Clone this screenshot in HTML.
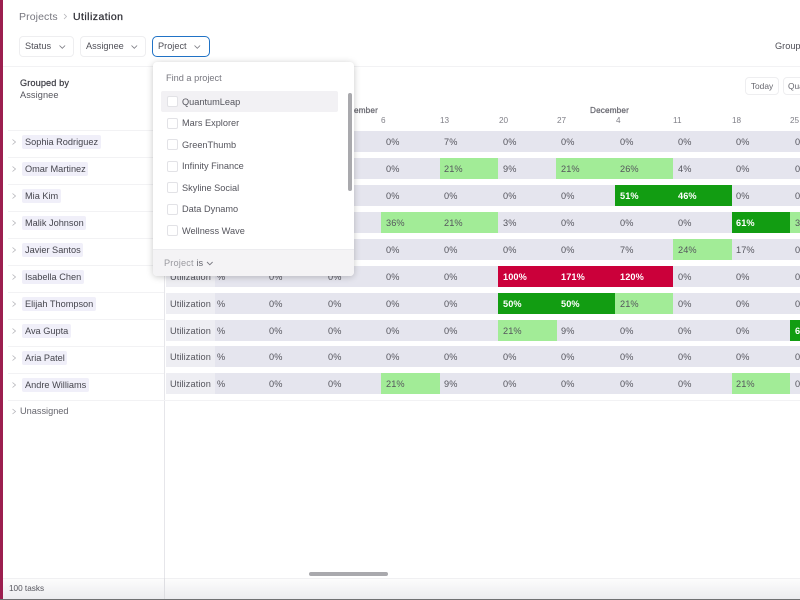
<!DOCTYPE html>
<html><head><meta charset="utf-8">
<style>
html,body{margin:0;padding:0;width:800px;height:600px;overflow:hidden;background:#fff}
body{font-family:"Liberation Sans",sans-serif;font-size:9.2px;color:#4f4f57}
#p{position:absolute;left:0;top:0;width:800px;height:600px;overflow:hidden;background:#fff;filter:blur(.3px)}
div,span{position:absolute;white-space:nowrap}
.bar{left:0;top:0;width:3px;height:600px;background:#9c1f4f}
.btn{top:36px;height:19px;border:1px solid #eeeeF0;border-radius:4px;line-height:19px;box-sizing:content-box}
.btn span{left:5px;top:0}
svg{position:absolute;overflow:visible}
.hl{left:3px;height:1px;background:#f2f2f4}
.n{left:22px;height:14px;line-height:14px;background:#f0eff9;border-radius:2px;padding:0 2.500px 0 3px;color:#45454d}
.row{left:166px;width:634px;height:21px;background:#e5e5ee}
.row .l{left:0;top:0;width:49px;height:21px;background:#eeeef3}
.row span{top:0;line-height:22px;color:#55555d;letter-spacing:.1px}
.row .u{left:4px}
.g,.G,.R{top:0;height:21px}
.g{background:#a2ec97}.G{background:#129d12}.R{background:#cb003a}
.w{color:#fff!important;font-weight:bold}
.d{color:#7f7f87;top:116px;font-size:8.2px;line-height:10px}
.m{color:#66666e;top:106px;font-size:8.2px;line-height:10px;-webkit-text-stroke:.25px #66666e;letter-spacing:.15px}
.pop{left:153px;top:62px;width:201px;height:214px;background:#fff;border-radius:4px;box-shadow:0 1px 7px rgba(0,0,0,.22);overflow:hidden}
.cb{left:14px;width:9px;height:9px;border:1px solid #e2e2e6;border-radius:2px;background:#fff}
.it{left:29px;line-height:12px;color:#55555d}
</style></head><body><div id="p">
<div class="bar"></div>

<div style="left:19px;top:10px;font-size:10.5px;line-height:14px;color:#77777f;letter-spacing:.1px">Projects</div>
<svg style="left:0;top:0" width="1" height="1"><path d="M64 14l2.500 2.500L64 19" fill="none" stroke="#b5b5ba" stroke-width=".8"/></svg>
<div style="left:73px;top:10px;font-size:10.5px;line-height:14px;color:#2f2f36;letter-spacing:.45px;-webkit-text-stroke:.25px #2f2f36">Utilization</div>

<div class="btn" style="left:19px;width:53px"><span>Status</span><svg style="left:0;top:0" width="1" height="1"><path d="M39.500 8.500l2.800 2.800 2.800-2.800" fill="none" stroke="#77777f" stroke-width=".8"/></svg></div>
<div class="btn" style="left:80px;width:64px"><span>Assignee</span><svg style="left:0;top:0" width="1" height="1"><path d="M50.500 8.500l2.800 2.800 2.800-2.800" fill="none" stroke="#77777f" stroke-width=".8"/></svg></div>
<div class="btn" style="left:152px;width:56px;border:1px solid #2173c6;border-radius:5px"><span>Project</span><svg style="left:0;top:0" width="1" height="1"><path d="M41.500 8.500l2.800 2.800 2.800-2.800" fill="none" stroke="#77777f" stroke-width=".8"/></svg></div>
<div style="left:775px;top:41px;line-height:11px;color:#4f4f57">Group</div>
<div class="hl" style="top:66px;width:797px"></div>

<div style="left:20px;top:78px;line-height:11px;color:#3c3c44;-webkit-text-stroke:.2px #3c3c44;letter-spacing:.1px">Grouped by</div>
<div style="left:20px;top:90px;line-height:11px;color:#55555d;letter-spacing:.1px">Assignee</div>

<div style="left:745px;top:77px;width:32px;height:16px;border:1px solid #eeeef0;border-radius:4px;line-height:16px;text-align:center;font-size:8.4px;color:#66666e">Today</div>
<div style="left:783px;top:77px;width:30px;height:16px;border:1px solid #eeeef0;border-radius:4px;line-height:16px;font-size:8.4px;color:#66666e;text-indent:4px">Quarter</div>

<div class="m" style="left:339px">November</div>
<div class="m" style="left:590px">December</div>
<div class="d" style="left:381px">6</div><div class="d" style="left:440px">13</div><div class="d" style="left:499px">20</div><div class="d" style="left:557px">27</div><div class="d" style="left:616px">4</div><div class="d" style="left:673px">11</div><div class="d" style="left:732px">18</div><div class="d" style="left:790px">25</div>

<div style="left:164px;top:67px;width:1px;height:533px;background:#e6e6ea"></div>

<div class="hl" style="top:130px;left:8px;width:156px"></div>
<div class="hl" style="top:157px;left:8px;width:156px"></div>
<div class="hl" style="top:184px;left:8px;width:156px"></div>
<div class="hl" style="top:211px;left:8px;width:156px"></div>
<div class="hl" style="top:238px;left:8px;width:156px"></div>
<div class="hl" style="top:265px;left:8px;width:156px"></div>
<div class="hl" style="top:292px;left:8px;width:156px"></div>
<div class="hl" style="top:319px;left:8px;width:156px"></div>
<div class="hl" style="top:346px;left:8px;width:156px"></div>
<div class="hl" style="top:373px;left:8px;width:156px"></div>
<div class="hl" style="top:400px;left:8px;width:792px"></div>

<svg style="left:0;top:0" width="1" height="1"><g fill="none" stroke="#b4b4ba" stroke-width=".8"><path d="M12.500 139.500l3 2.500-3 2.500"/><path d="M12.500 166.500l3 2.500-3 2.500"/><path d="M12.500 193.500l3 2.500-3 2.500"/><path d="M12.500 220.500l3 2.500-3 2.500"/><path d="M12.500 247.500l3 2.500-3 2.500"/><path d="M12.500 274.500l3 2.500-3 2.500"/><path d="M12.500 301.500l3 2.500-3 2.500"/><path d="M12.500 328.500l3 2.500-3 2.500"/><path d="M12.500 355.500l3 2.500-3 2.500"/><path d="M12.500 382.500l3 2.500-3 2.500"/><path d="M12.500 409l3 2.500-3 2.500"/></g></svg>

<div class="n" style="top:135px">Sophia Rodriguez</div>
<div class="n" style="top:162px">Omar Martinez</div>
<div class="n" style="top:189px">Mia Kim</div>
<div class="n" style="top:216px">Malik Johnson</div>
<div class="n" style="top:243px">Javier Santos</div>
<div class="n" style="top:270px">Isabella Chen</div>
<div class="n" style="top:297px">Elijah Thompson</div>
<div class="n" style="top:324px">Ava Gupta</div>
<div class="n" style="top:351px">Aria Patel</div>
<div class="n" style="top:378px">Andre Williams</div>
<div style="left:20px;top:406px;line-height:11px;color:#66666e">Unassigned</div>

<div class="row" style="top:131px"><span style="left:220px">0%</span><span style="left:278px">7%</span><span style="left:337px">0%</span><span style="left:395px">0%</span><span style="left:454px">0%</span><span style="left:512px">0%</span><span style="left:570px">0%</span><span style="left:629px">0%</span></div>

<div class="row" style="top:158px"><div class="g" style="left:274px;width:58px"></div><div class="g" style="left:390px;width:117px"></div><span style="left:220px">0%</span><span style="left:278px">21%</span><span style="left:337px">9%</span><span style="left:395px">21%</span><span style="left:454px">26%</span><span style="left:512px">4%</span><span style="left:570px">0%</span><span style="left:629px">0%</span></div>

<div class="row" style="top:185px"><div class="G" style="left:449px;width:117px"></div><span style="left:220px">0%</span><span style="left:278px">0%</span><span style="left:337px">0%</span><span style="left:395px">0%</span><span class="w" style="left:454px">51%</span><span class="w" style="left:512px">46%</span><span style="left:570px">0%</span><span style="left:629px">0%</span></div>

<div class="row" style="top:212px"><div class="g" style="left:215px;width:117px"></div><div class="G" style="left:566px;width:58px"></div><div class="g" style="left:624px;width:10px"></div><span style="left:220px">36%</span><span style="left:278px">21%</span><span style="left:337px">3%</span><span style="left:395px">0%</span><span style="left:454px">0%</span><span style="left:512px">0%</span><span class="w" style="left:570px">61%</span><span style="left:629px">3%</span></div>

<div class="row" style="top:239px"><div class="g" style="left:507px;width:59px"></div><span style="left:220px">0%</span><span style="left:278px">0%</span><span style="left:337px">0%</span><span style="left:395px">0%</span><span style="left:454px">7%</span><span style="left:512px">24%</span><span style="left:570px">17%</span><span style="left:629px">0%</span></div>

<div class="row" style="top:266px"><div class="l"></div><span class="u">Utilization</span><span style="left:51px">%</span><span style="left:103px">0%</span><span style="left:162px">0%</span><div class="R" style="left:332px;width:175px"></div><span style="left:220px">0%</span><span style="left:278px">0%</span><span class="w" style="left:337px">100%</span><span class="w" style="left:395px">171%</span><span class="w" style="left:454px">120%</span><span style="left:512px">0%</span><span style="left:570px">0%</span><span style="left:629px">0%</span></div>

<div class="row" style="top:293px"><div class="l"></div><span class="u">Utilization</span><span style="left:51px">%</span><span style="left:103px">0%</span><span style="left:162px">0%</span><div class="G" style="left:332px;width:117px"></div><div class="g" style="left:449px;width:58px"></div><span style="left:220px">0%</span><span style="left:278px">0%</span><span class="w" style="left:337px">50%</span><span class="w" style="left:395px">50%</span><span style="left:454px">21%</span><span style="left:512px">0%</span><span style="left:570px">0%</span><span style="left:629px">0%</span></div>

<div class="row" style="top:320px"><div class="l"></div><span class="u">Utilization</span><span style="left:51px">%</span><span style="left:103px">0%</span><span style="left:162px">0%</span><div class="g" style="left:332px;width:59px"></div><div class="G" style="left:624px;width:10px"></div><span style="left:220px">0%</span><span style="left:278px">0%</span><span style="left:337px">21%</span><span style="left:395px">9%</span><span style="left:454px">0%</span><span style="left:512px">0%</span><span style="left:570px">0%</span><span class="w" style="left:629px">61%</span></div>

<div class="row" style="top:346px"><div class="l"></div><span class="u">Utilization</span><span style="left:51px">%</span><span style="left:103px">0%</span><span style="left:162px">0%</span><span style="left:220px">0%</span><span style="left:278px">0%</span><span style="left:337px">0%</span><span style="left:395px">0%</span><span style="left:454px">0%</span><span style="left:512px">0%</span><span style="left:570px">0%</span><span style="left:629px">0%</span></div>

<div class="row" style="top:373px"><div class="l"></div><span class="u">Utilization</span><span style="left:51px">%</span><span style="left:103px">0%</span><span style="left:162px">0%</span><div class="g" style="left:215px;width:59px"></div><div class="g" style="left:566px;width:58px"></div><span style="left:220px">21%</span><span style="left:278px">9%</span><span style="left:337px">0%</span><span style="left:395px">0%</span><span style="left:454px">0%</span><span style="left:512px">0%</span><span style="left:570px">21%</span><span style="left:629px">0%</span></div>

<div class="pop">
<div style="left:13px;top:10px;line-height:12px;color:#77777f">Find a project</div>
<div style="left:8px;top:29px;width:177px;height:21px;background:#f2f1f4;border-radius:2px"></div>
<div style="left:195px;top:31px;width:4px;height:98px;background:#a9a9ad;border-radius:2px"></div>
<div class="cb" style="top:34px"></div><div class="it" style="top:34px">QuantumLeap</div>
<div class="cb" style="top:56px"></div><div class="it" style="top:55px">Mars Explorer</div>
<div class="cb" style="top:77px"></div><div class="it" style="top:77px">GreenThumb</div>
<div class="cb" style="top:99px"></div><div class="it" style="top:98px">Infinity Finance</div>
<div class="cb" style="top:120px"></div><div class="it" style="top:120px">Skyline Social</div>
<div class="cb" style="top:142px"></div><div class="it" style="top:141px">Data Dynamo</div>
<div class="cb" style="top:163px"></div><div class="it" style="top:163px">Wellness Wave</div>
<div style="left:0;top:187px;width:201px;height:27px;background:#f4f3f5;border-top:1px solid #ececef"></div>
<div style="left:11px;top:196px;line-height:11px;color:#9a9aa0;letter-spacing:.15px">Project <span style="position:static;color:#66666e">is</span></div>
<svg style="left:0;top:0" width="1" height="1"><path d="M54 200l2.800 2.800 2.800-2.800" fill="none" stroke="#77777f" stroke-width=".9"/></svg>
</div>

<div style="left:309px;top:572px;width:79px;height:4px;background:#a9a9ad;border-radius:2px"></div>
<div style="left:3px;top:578px;width:797px;height:21px;background:linear-gradient(#fcfcfc,#ececef);border-top:1px solid #f0f0f2;box-sizing:border-box"></div>
<div style="left:164px;top:578px;width:1px;height:21px;background:#dedee2"></div>
<div style="left:9px;top:584px;font-size:8.2px;line-height:10px;color:#55555d">100 tasks</div>
<div style="left:0;top:599px;width:800px;height:1px;background:#6f7072"></div>
</div></body></html>
